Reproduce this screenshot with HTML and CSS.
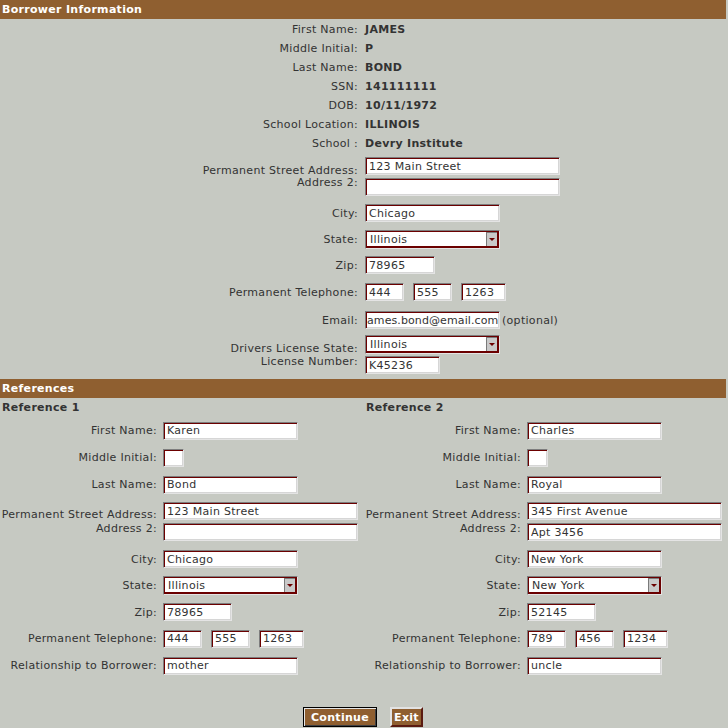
FILE: index.html
```html
<!DOCTYPE html>
<html>
<head>
<meta charset="utf-8">
<title>Borrower Information</title>
<link rel="stylesheet" href="styles.css">
</head>
<body>
<div class="bar">Borrower Information</div>
<div class="info">
  <div class="row r19"><span class="lbl">First Name:</span><span class="val">JAMES</span></div>
  <div class="row r19"><span class="lbl">Middle Initial:</span><span class="val">P</span></div>
  <div class="row r19"><span class="lbl">Last Name:</span><span class="val">BOND</span></div>
  <div class="row r19"><span class="lbl">SSN:</span><span class="val">141111111</span></div>
  <div class="row r19"><span class="lbl">DOB:</span><span class="val">10/11/1972</span></div>
  <div class="row r19"><span class="lbl">School Location:</span><span class="val">ILLINOIS</span></div>
  <div class="row r19"><span class="lbl">School :</span><span class="val">Devry Institute</span></div>
  <div class="row addr">
    <span class="lbl two">Permanent Street Address:<br>Address 2:</span>
    <span class="stack"><input class="txt w195" value="123 Main Street"><input class="txt w195" value=""></span>
  </div>
  <div class="row r26"><span class="lbl">City:</span><span><input class="txt w135" value="Chicago"></span></div>
  <div class="row r26"><span class="lbl">State:</span><span class="sel"><select><option>Illinois</option></select><span class="sel-btn"></span></span></div>
  <div class="row r26"><span class="lbl">Zip:</span><span><input class="txt w70" value="78965"></span></div>
  <div class="row r28"><span class="lbl">Permanent Telephone:</span><span class="tel"><input class="txt w39" value="444"><input class="txt w39" value="555"><input class="txt w45" value="1263"></span></div>
  <div class="row r28"><span class="lbl">Email:</span><span class="mail"><input class="txt w135 tight" value="ames.bond@email.com"><span class="opt">(optional)</span></span></div>
  <div class="row dl">
    <span class="lbl two13">Drivers License State:<br>License Number:</span>
    <span class="stack2"><span class="sel"><select><option>Illinois</option></select><span class="sel-btn"></span></span><input class="txt w75" value="K45236"></span>
  </div>
</div>
<div class="bar">References</div>
<div class="refs">
  <div class="ref-col">
    <div class="ref-title">Reference 1</div>
    <div class="rrow r27"><span class="lbl">First Name:</span><span><input class="txt w135" value="Karen"></span></div>
    <div class="rrow r27"><span class="lbl">Middle Initial:</span><span><input class="txt w21" value=""></span></div>
    <div class="rrow r27"><span class="lbl">Last Name:</span><span><input class="txt w135" value="Bond"></span></div>
    <div class="rrow raddr">
      <span class="lbl two14">Permanent Street Address:<br>Address 2:</span>
      <span class="stack"><input class="txt w195" value="123 Main Street"><input class="txt w195" value=""></span>
    </div>
    <div class="rrow r26"><span class="lbl">City:</span><span><input class="txt w135" value="Chicago"></span></div>
    <div class="rrow r27"><span class="lbl">State:</span><span class="sel"><select><option>Illinois</option></select><span class="sel-btn"></span></span></div>
    <div class="rrow r26"><span class="lbl">Zip:</span><span><input class="txt w69" value="78965"></span></div>
    <div class="rrow r27"><span class="lbl">Permanent Telephone:</span><span class="tel"><input class="txt w39" value="444"><input class="txt w39" value="555"><input class="txt w45" value="1263"></span></div>
    <div class="rrow r27"><span class="lbl">Relationship to Borrower:</span><span><input class="txt w135" value="mother"></span></div>
  </div>
  <div class="ref-col">
    <div class="ref-title">Reference 2</div>
    <div class="rrow r27"><span class="lbl">First Name:</span><span><input class="txt w135" value="Charles"></span></div>
    <div class="rrow r27"><span class="lbl">Middle Initial:</span><span><input class="txt w21" value=""></span></div>
    <div class="rrow r27"><span class="lbl">Last Name:</span><span><input class="txt w135" value="Royal"></span></div>
    <div class="rrow raddr">
      <span class="lbl two14">Permanent Street Address:<br>Address 2:</span>
      <span class="stack"><input class="txt w195" value="345 First Avenue"><input class="txt w195" value="Apt 3456"></span>
    </div>
    <div class="rrow r26"><span class="lbl">City:</span><span><input class="txt w135" value="New York"></span></div>
    <div class="rrow r27"><span class="lbl">State:</span><span class="sel"><select><option>New York</option></select><span class="sel-btn"></span></span></div>
    <div class="rrow r26"><span class="lbl">Zip:</span><span><input class="txt w69" value="52145"></span></div>
    <div class="rrow r27"><span class="lbl">Permanent Telephone:</span><span class="tel"><input class="txt w39" value="789"><input class="txt w39" value="456"><input class="txt w45" value="1234"></span></div>
    <div class="rrow r27"><span class="lbl">Relationship to Borrower:</span><span><input class="txt w135" value="uncle"></span></div>
  </div>
</div>
<div class="actions">
  <button class="btn btn-default">Continue</button>
  <button class="btn btn-exit">Exit</button>
</div>
</body>
</html>
```
FILE: styles.css
```css
html, body {
  margin: 0;
  padding: 0;
}
body {
  background: #c6c9c2;
  font-family: "DejaVu Sans", Verdana, sans-serif;
  font-size: 11px;
  letter-spacing: 0.3px;
  color: #333;
  width: 728px;
  height: 728px;
  overflow: hidden;
}
.bar {
  height: 19px;
  line-height: 20px;
  background: #8f5f30;
  color: #fff;
  font-weight: bold;
  padding-left: 2px;
  width: 724px;
}
.info {
  display: flex;
  flex-direction: column;
  padding-top: 1px;
}
.row {
  display: grid;
  grid-template-columns: 358px auto;
  column-gap: 7px;
  align-items: center;
  box-sizing: border-box;
}
.lbl {
  text-align: right;
  white-space: nowrap;
}
.val {
  font-weight: bold;
}
.r19 { height: 19px; }
.r26 { height: 26px; }
.r27 { height: 27px; }
.r28 { height: 28px; }
.addr {
  height: 47px;
  padding: 4px 0 4px;
}
.dl {
  padding: 1px 0 5px;
}
.two { line-height: 12px; }
.two13 { line-height: 13px; }
.two14 { line-height: 14px; }
.stack {
  display: flex;
  flex-direction: column;
  align-items: flex-start;
  gap: 3px;
}
.stack2 {
  display: flex;
  flex-direction: column;
  align-items: flex-start;
  gap: 2px;
}
.tel {
  display: flex;
  gap: 9px;
}
.mail {
  display: flex;
  align-items: center;
  gap: 2px;
}
.txt {
  box-sizing: border-box;
  height: 18px;
  margin: 0;
  padding: 0 0 0 3px;
  border: 1px solid;
  border-color: #7d7d7d #e4e4e4 #e4e4e4 #7d7d7d;
  box-shadow: inset 1px 1px 0 #6b0000, inset -1px -1px 0 #d6d6d6;
  background: #fff;
  font-family: "DejaVu Sans", Verdana, sans-serif;
  font-size: 11px;
  letter-spacing: 0.3px;
  color: #333;
  display: block;
  outline: none;
}
.txt.tight {
  padding: 0 0 0 1px;
  letter-spacing: 0.1px;
}
.w21 { width: 21px; }
.w39 { width: 39px; }
.w45 { width: 45px; }
.w69 { width: 69px; }
.w70 { width: 70px; }
.w75 { width: 75px; }
.w135 { width: 135px; }
.w195 { width: 195px; }
.sel {
  position: relative;
  display: block;
  width: 135px;
  height: 19px;
}
.sel select {
  -webkit-appearance: none;
  appearance: none;
  box-sizing: border-box;
  width: 135px;
  height: 19px;
  margin: 0;
  padding: 0 0 0 4px;
  border: 1px solid;
  border-color: #7d7d7d #e4e4e4 #e4e4e4 #7d7d7d;
  box-shadow: inset 1px 1px 0 #6b0000, inset -2px -2px 0 #6b0000;
  background: #fff;
  font-family: "DejaVu Sans", Verdana, sans-serif;
  font-size: 11px;
  letter-spacing: 0.3px;
  color: #333;
  outline: none;
}
.sel-btn {
  position: absolute;
  right: 3px;
  top: 2px;
  width: 10px;
  height: 13px;
  background: #c9c9c9;
  border-left: 1px solid #7a7a7a;
  border-top: 1px solid #7a7a7a;
}
.sel-btn::before {
  content: "";
  position: absolute;
  left: 2px;
  top: 5px;
  border-left: 3px solid transparent;
  border-right: 3px solid transparent;
  border-top: 3px solid #6b0000;
}
.refs {
  display: grid;
  grid-template-columns: 364px 364px;
}
.ref-col {
  display: flex;
  flex-direction: column;
}
.ref-title {
  height: 19px;
  line-height: 20px;
  padding-left: 2px;
  font-weight: bold;
}
.rrow {
  display: grid;
  grid-template-columns: 157px auto;
  column-gap: 6px;
  align-items: center;
  box-sizing: border-box;
}
.raddr {
  padding: 4px 0 5px;
}
.actions {
  display: flex;
  justify-content: center;
  gap: 13px;
  padding-top: 28px;
  padding-right: 2px;
}
.btn {
  box-sizing: border-box;
  height: 20px;
  margin: 0;
  padding: 0;
  background: #8f5f30;
  color: #fff;
  font-family: "DejaVu Sans", Verdana, sans-serif;
  font-size: 11px;
  font-weight: bold;
  letter-spacing: 0.3px;
  cursor: pointer;
}
.btn-default {
  width: 74px;
  border: 1px solid #000;
  box-shadow: inset 1px 1px 0 #e6e6e6, inset -1px -1px 0 #404040;
}
.btn-exit {
  width: 33px;
  border: 2px solid;
  border-color: #e2e2e2 #5a1a10 #5a1a10 #e2e2e2;
}
```
